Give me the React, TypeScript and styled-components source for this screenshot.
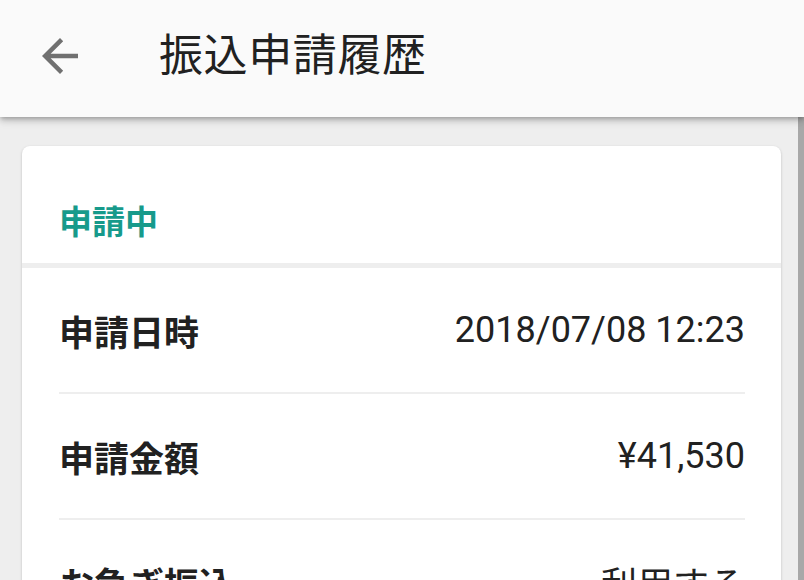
import React from "react";
import styled, { createGlobalStyle } from "styled-components";

const GlobalStyle = createGlobalStyle`
  html, body {
    margin: 0;
    padding: 0;
    background: #eeeeee;
    overflow: hidden;
  }
  body {
    font-family: Roboto, "Noto Sans CJK JP", "Noto Sans", sans-serif;
    color: #212121;
  }
`;

const Page = styled.div`
  position: relative;
  width: 804px;
  height: 580px;
  overflow: hidden;
  background: #eeeeee;
  display: flex;
  flex-direction: column;
`;

const AppBar = styled.header`
  position: relative;
  z-index: 2;
  flex: 0 0 auto;
  height: 117px;
  background: #fafafa;
  display: flex;
  align-items: center;
  padding-left: 33px;
  padding-bottom: 6px;
  box-sizing: border-box;
  box-shadow: 0 2px 4px -1px rgba(0, 0, 0, 0.2), 0 4px 6px 0 rgba(0, 0, 0, 0.14),
    0 1px 12px 0 rgba(0, 0, 0, 0.12);
`;

const BackButton = styled.button`
  width: 54px;
  height: 54px;
  padding: 0;
  border: none;
  background: transparent;
  display: flex;
  align-items: center;
  justify-content: center;
  color: #707070;
`;

const Title = styled.h1`
  margin: 0 0 0 72px;
  font-size: 44px;
  line-height: 1;
  font-weight: 400;
  color: #212121;
  letter-spacing: 0.6px;
`;

const Content = styled.main`
  flex: 1 1 auto;
  padding: 29px 23px 0 22px;
`;

const Card = styled.section`
  background: #ffffff;
  border-radius: 8px;
  box-shadow: 0 1px 3px rgba(0, 0, 0, 0.18), 0 1px 1px rgba(0, 0, 0, 0.08);
  overflow: hidden;
`;

const CardHeader = styled.div`
  padding: 60px 37px 24px;
  border-bottom: 5px solid #eeeeee;
`;

const Status = styled.h2`
  margin: 0;
  font-size: 33px;
  line-height: 33px;
  font-weight: 700;
  color: #179a8b;
`;

const Row = styled.div`
  margin: 0 36px 0 37px;
  height: 124px;
  border-bottom: 2px solid #eeeeee;
  display: flex;
  align-items: center;
  justify-content: space-between;
`;

const Label = styled.span`
  font-size: 35px;
  font-weight: 700;
  color: #212121;
`;

const Value = styled.span`
  font-size: 36px;
  font-weight: 400;
  color: #212121;
`;

const ScrollIndicator = styled.div`
  position: absolute;
  top: 117px;
  right: 0;
  bottom: 0;
  width: 6px;
  background: #a8a8a8;
  z-index: 1;
`;

const ArrowBack = () => (
  <svg width="54" height="54" viewBox="0 0 24 24" fill="currentColor" aria-hidden>
    <path d="M20 11H7.83l5.59-5.59L12 4l-8 8 8 8 1.41-1.41L7.83 13H20v-2z" />
  </svg>
);

const rows = [
  { label: "申請日時", value: "2018/07/08 12:23" },
  { label: "申請金額", value: "¥41,530" },
  { label: "お急ぎ振込", value: "利用する" },
];

export default function App() {
  return (
    <>
      <GlobalStyle />
      <Page>
        <AppBar>
          <BackButton aria-label="戻る">
            <ArrowBack />
          </BackButton>
          <Title>振込申請履歴</Title>
        </AppBar>
        <Content>
          <Card>
            <CardHeader>
              <Status>申請中</Status>
            </CardHeader>
            {rows.map((r) => (
              <Row key={r.label}>
                <Label>{r.label}</Label>
                <Value>{r.value}</Value>
              </Row>
            ))}
          </Card>
        </Content>
        <ScrollIndicator />
      </Page>
    </>
  );
}
